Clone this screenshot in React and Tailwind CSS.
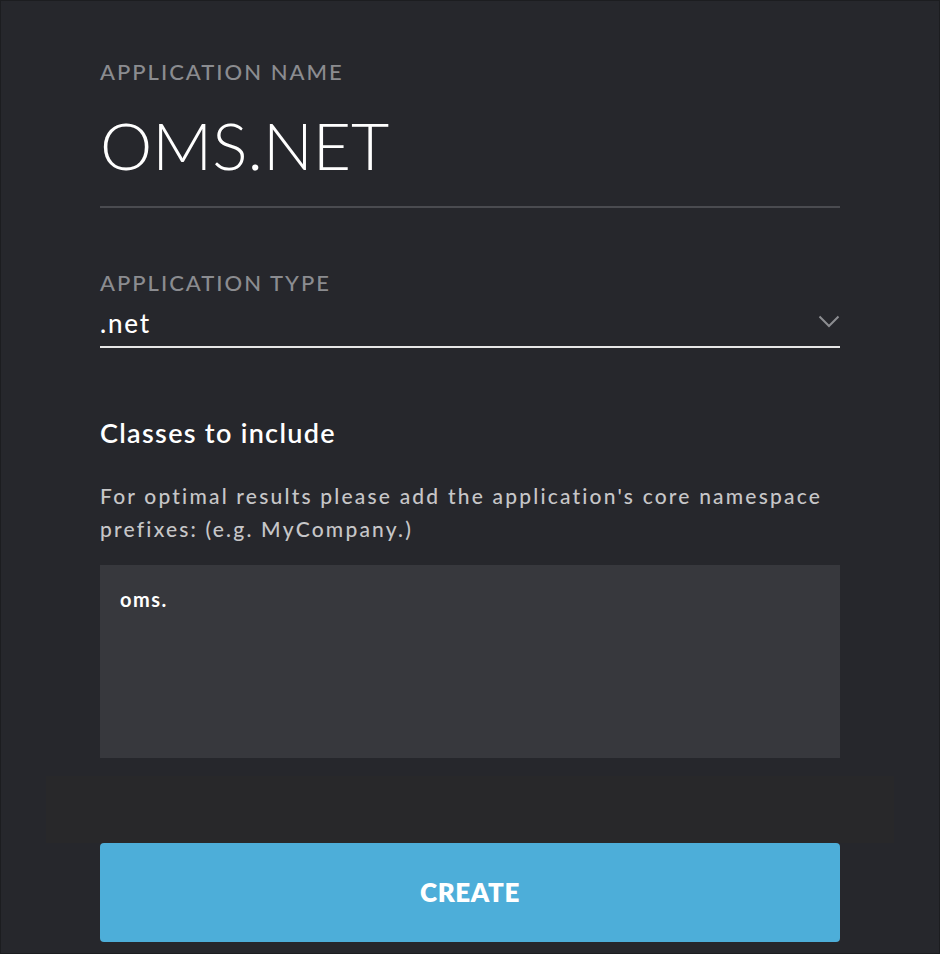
import React, { useState } from 'react';

function Chevron() {
  return (
    <svg width="22" height="13" viewBox="0 0 22 13" fill="none" className="shrink-0 mb-[3px]">
      <path d="M1.5 1.5l9.5 9.5 9.5-9.5" stroke="#8c8d91" strokeWidth="2" />
    </svg>
  );
}

export default function App() {
  const [name] = useState('OMS.NET');
  const [type] = useState('.net');
  const [classes, setClasses] = useState('oms.');

  return (
    <div className="w-[940px] h-[954px] bg-[#26272c] border border-[#1c1d20] font-['Lato','Noto_Sans',sans-serif] overflow-hidden">
      <div className="ml-[99px] w-[740px] flex flex-col">
        <div className="mt-[59px] text-[22px] leading-[24px] tracking-[2px] font-medium uppercase text-[#8b8c90]">Application name</div>
        <div className="mt-[25px] text-[66px] leading-[72px] font-light text-white">{name}</div>
        <div className="mt-[25px] h-[2px] bg-[#4a4b50]" />

        <div className="mt-[63px] text-[22px] leading-[24px] tracking-[2px] font-medium uppercase text-[#8b8c90]">Application type</div>
        <div className="mt-[12px] flex items-center justify-between border-b-2 border-[#e6e6e6] pb-[7px]">
          <span className="text-[26px] leading-[32px] tracking-[1.8px] font-medium text-white">{type}</span>
          <Chevron />
        </div>

        <div className="mt-[68px] text-[27px] leading-[34px] tracking-[1.3px] font-semibold text-white">Classes to include</div>
        <p className="mt-[29px] text-[21px] leading-[33px] tracking-[2.2px] font-medium text-[#c6c6c8]">
          For optimal results please add the application's core namespace<br />prefixes: (e.g. MyCompany.)
        </p>
        <textarea
          className="mt-[20px] h-[193px] w-full resize-none bg-[#37383d] text-white text-[20px] leading-[24px] tracking-[1.5px] font-bold px-[20px] pt-[22px] outline-none font-['Lato','Noto_Sans',sans-serif]"
          value={classes}
          onChange={e => setClasses(e.target.value)}
        />
      </div>
      <div className="mt-[18px] mx-[45px] bg-[#28282a] h-[67px]" />
      <div className="ml-[99px] w-[740px]">
        <button className="w-full h-[99px] rounded-[4px] bg-[#4daed9] text-white text-[26px] font-extrabold tracking-[0.6px]">CREATE</button>
      </div>
    </div>
  );
}
